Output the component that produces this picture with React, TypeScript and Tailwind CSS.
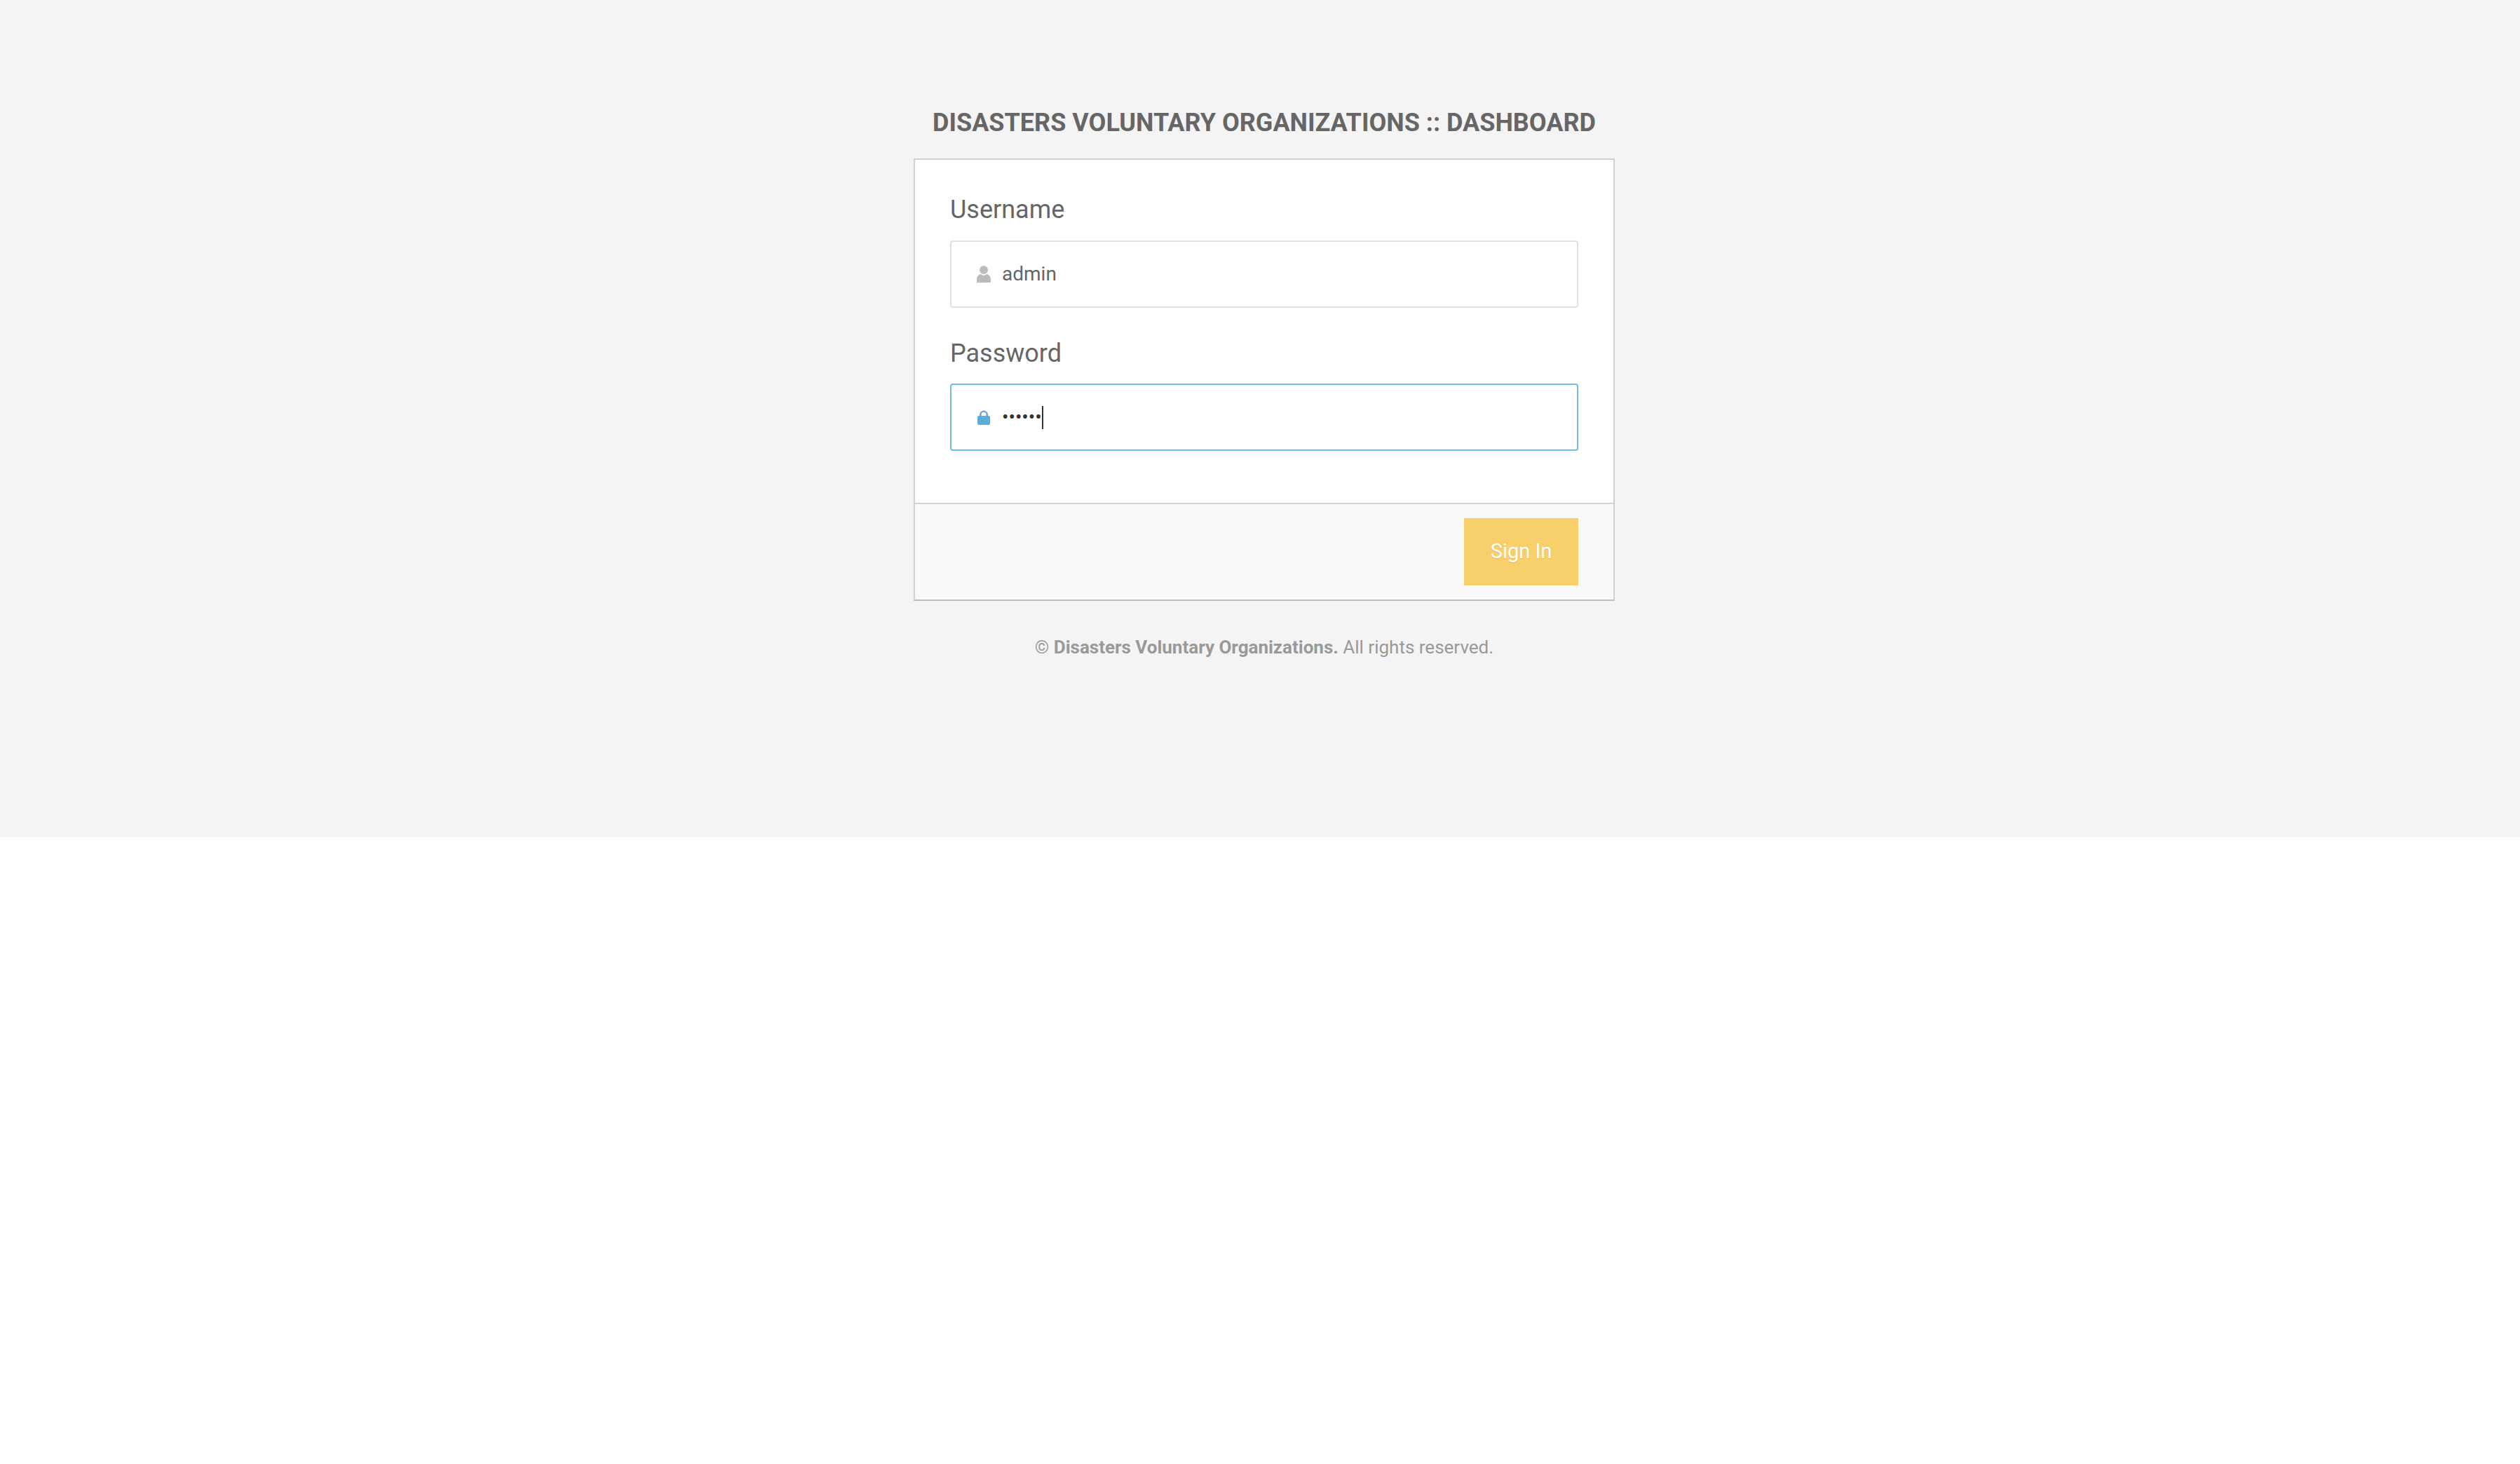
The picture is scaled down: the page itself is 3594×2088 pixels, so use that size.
export default function App() {
  return (
    <div className="min-h-[2088px] bg-white font-['Roboto',sans-serif]">
      <div className="h-[1194px] bg-[#f4f4f4] pt-[150px] pl-[12px]">
        <div className="mx-auto w-[1000px]">
          <h1 className="text-center text-[36px] leading-[50px] font-bold text-[#666666] uppercase">
            Disasters Voluntary Organizations :: Dashboard
          </h1>
          <div className="mt-[26px] border-2 border-[#d0d0d0] border-b-[#bfbfbf] bg-white">
            <div className="px-[50px] pt-[46px] pb-[74px]">
              <label className="block text-[36px] leading-[50px] text-[#666666]">Username</label>
              <div className="mt-[19px] flex h-[96px] items-center rounded-[4px] border-2 border-[#e0e0e0] pl-[36px]">
                <svg viewBox="0 0 20 24" className="h-[24px] w-[20px] fill-[#bbbbbb]">
                  <circle cx="10" cy="6" r="6" />
                  <path d="M0 19.5C0 14.5 3.5 12 6 12c1 1.2 2.4 1.8 4 1.8s3-.6 4-1.8c2.500 0 6 2.500 6 7.500V24H0z" />
                </svg>
                <span className="ml-[16px] text-[28px] leading-[40px] text-[#666666]">admin</span>
              </div>
              <label className="mt-[40px] block text-[36px] leading-[50px] text-[#666666]">Password</label>
              <div className="mt-[18px] flex h-[96px] items-center rounded-[4px] border-2 border-[#6fbfe6] pl-[37px]">
                <svg viewBox="0 0 18 22" className="h-[22px] w-[18px] fill-[#5eadd9]">
                  <path d="M3 10V7.500a6 6 0 0 1 12 0V10h-2.600V7.500a3.400 3.400 0 0 0-6.800 0V10z" />
                  <rect x="0" y="9" width="18" height="13" rx="2" />
                </svg>
                <span className="ml-[17px] text-[28px] leading-[40px] text-[#333333]">••••••</span>
                <span className="h-[33px] w-[2px] bg-[#333333]" />
              </div>
            </div>
            <div className="flex justify-end border-t-2 border-[#d4d4d4] bg-[#f9f9f9] px-[50px] py-[20px]">
              <button className="h-[96px] w-[163px] bg-[#f7cf6b] text-[29px] text-white [text-shadow:0_1px_1px_rgba(0,0,0,0.12)]">
                Sign In
              </button>
            </div>
          </div>
          <p className="mt-[46px] text-center text-[26px] leading-[40px] text-[#999999]">
            © <b className="font-bold">Disasters Voluntary Organizations.</b> All rights reserved.
          </p>
        </div>
      </div>
    </div>
  );
}
